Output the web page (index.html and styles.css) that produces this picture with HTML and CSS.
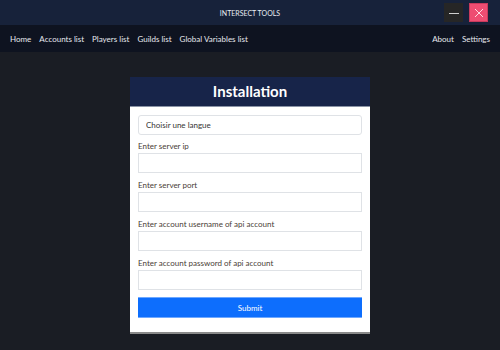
FILE: index.html
```html
<!DOCTYPE html>
<html lang="fr">
<head>
  <meta charset="UTF-8">
  <title>Intersect Tools</title>
  <link rel="stylesheet" href="styles.css">
</head>
<body>
  <header class="titlebar">
    <span class="titlebar-title">INTERSECT TOOLS</span>
    <div class="titlebar-buttons">
      <button class="win-btn minimize" aria-label="Minimize">
        <svg width="10" height="10" viewBox="0 0 10 10"><path d="M0 5.5h10" stroke="#cfcfcf" stroke-width="1"/></svg>
      </button>
      <button class="win-btn close" aria-label="Close">
        <svg width="10" height="10" viewBox="0 0 10 10"><path d="M1 1l8 8M9 1l-8 8" stroke="#ffd9e0" stroke-width="1"/></svg>
      </button>
    </div>
  </header>

  <nav class="navbar">
    <div class="nav-left">
      <a href="#">Home</a>
      <a href="#">Accounts list</a>
      <a href="#">Players list</a>
      <a href="#">Guilds list</a>
      <a href="#">Global Variables list</a>
    </div>
    <div class="nav-right">
      <a href="#">About</a>
      <a href="#">Settings</a>
    </div>
  </nav>

  <main class="content">
    <div class="card">
      <h1 class="card-header">Installation</h1>
      <form class="card-body">
        <select class="field select">
          <option>Choisir une langue</option>
        </select>

        <label class="group">
          <span>Enter server ip</span>
          <input class="field" type="text">
        </label>

        <label class="group">
          <span>Enter server port</span>
          <input class="field" type="text">
        </label>

        <label class="group">
          <span>Enter account username of api account</span>
          <input class="field" type="text">
        </label>

        <label class="group">
          <span>Enter account password of api account</span>
          <input class="field" type="password">
        </label>

        <button class="submit-btn" type="button">Submit</button>
      </form>
    </div>
  </main>
</body>
</html>
```

FILE: styles.css
```css
* {
  margin: 0;
  padding: 0;
  box-sizing: border-box;
}

body {
  font-family: Lato, "Noto Sans", sans-serif;
  background-color: #1a1d24;
  color: #e6e6e6;
  font-size: 8px;
  width: 500px;
  height: 350px;
  overflow: hidden;
}

/* タイトルバー */
.titlebar {
  height: 25px;
  background-color: #17223a;
  display: flex;
  align-items: center;
  justify-content: center;
  position: relative;
}

.titlebar-title {
  font-size: 7px;
  color: #e8ecf2;
}

.titlebar-buttons {
  position: absolute;
  right: 12px;
  top: 3px;
  display: flex;
  gap: 6px;
}

.win-btn {
  width: 19px;
  height: 19px;
  border: none;
  display: flex;
  align-items: center;
  justify-content: center;
}

.win-btn.minimize {
  background-color: #262626;
}

.win-btn.close {
  background-color: #ee4d72;
  border: 1px solid #c83a5c;
}

/* ナビゲーション */
.navbar {
  height: 27px;
  background-color: #0e1320;
  display: flex;
  align-items: center;
  justify-content: space-between;
  padding: 0 10px;
}

.nav-left,
.nav-right {
  display: flex;
  gap: 8px;
}

.navbar a {
  color: #e6e8ee;
  text-decoration: none;
  font-size: 8px;
}

/* カード */
.content {
  display: flex;
  justify-content: center;
  padding-top: 25px;
}

.card {
  width: 240px;
  background-color: #ffffff;
  border-bottom: 2px solid #8a8a8a;
}

.card-header {
  height: 30px;
  background-color: #172449;
  color: #ffffff;
  font-size: 15px;
  font-weight: 700;
  text-align: center;
  line-height: 29px;
  border-bottom: 1px solid #8a93a6;
}

.card-body {
  display: flex;
  flex-direction: column;
  padding: 8px 8px 14px;
}

.field {
  display: block;
  width: 100%;
  height: 20px;
  border: 1px solid #dfe2e6;
  background-color: #ffffff;
}

.select {
  border-radius: 3px;
  font-family: inherit;
  font-size: 8px;
  color: #333;
  padding: 0 7px;
  appearance: none;
  margin-bottom: 5px;
}

.group {
  display: flex;
  flex-direction: column;
  margin-bottom: 6px;
}

.group span {
  color: #4a4036;
  font-size: 8px;
  line-height: 13px;
}

.submit-btn {
  margin-top: 1px;
  height: 21px;
  width: 100%;
  border: none;
  border-top: 1px solid #6ea8ff;
  border-bottom: 1px solid #6ea8ff;
  background-color: #0d6efd;
  color: #ffffff;
  font-family: inherit;
  font-size: 8px;
}
```
